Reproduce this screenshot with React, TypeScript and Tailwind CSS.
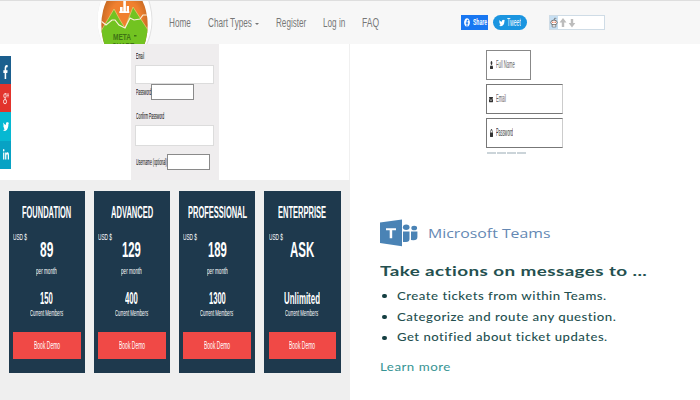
import { useLayoutEffect, useRef, useState, type ReactNode } from 'react';
import { FaFacebookF, FaTwitter, FaLinkedinIn, FaUser, FaEnvelope, FaLock, FaFacebook } from 'react-icons/fa';

/* One line of text condensed or expanded to the width given in className. */
function Fit({ className, children }: { className: string; children: ReactNode }) {
  const box = useRef<HTMLSpanElement>(null);
  const text = useRef<HTMLSpanElement>(null);
  const [scale, setScale] = useState(1);
  useLayoutEffect(() => {
    const measure = () => {
      if (box.current && text.current) setScale(box.current.clientWidth / text.current.offsetWidth);
    };
    measure();
    document.fonts.ready.then(measure);
  }, []);
  return (
    <span ref={box} className={`block shrink-0 whitespace-nowrap ${className}`}>
      <span ref={text} className="inline-block origin-left" style={{ transform: `scaleX(${scale})` }}>
        {children}
      </span>
    </span>
  );
}

function MetaLogo() {
  return (
    <svg className="ml-[97px] h-[44px] w-[56px] shrink-0" viewBox="0 0 56 44">
      <defs>
        <clipPath id="inner">
          <ellipse cx="27.5" cy="25" rx="23.2" ry="38" />
        </clipPath>
        <radialGradient id="orange" cx="50%" cy="50%" r="55%">
          <stop offset="50%" stopColor="#f0802f" />
          <stop offset="100%" stopColor="#a85a1c" />
        </radialGradient>
      </defs>
      <ellipse cx="28" cy="20" rx="27.5" ry="41" fill="#e2e2e2" />
      <ellipse cx="27.5" cy="20" rx="27" ry="40" fill="#fff" />
      <g clipPath="url(#inner)">
        <rect width="56" height="66" y="-14" fill="url(#orange)" />
        <path d="M4 31 L17 9 L23 20 L28 28 L36 7 L51 30 V56 H4Z" fill="#72c321" />
        <path d="M4 31 L17 9 L23 20 L28 28 L36 7 L51 30" fill="none" stroke="#e8d27a" strokeWidth=".7" />
        <path d="M4 21 L9 25 L15 20 L18 20 L22 25 L28 28 L33 18 L37 20 L43 19 L46 15 L51 15" fill="none" stroke="#fbf0da" strokeWidth="1.2" />
        <path d="M23 7h2.6v5H23zM26.3 0h2.6v12h-2.6zM29.7 6h2.3v6h-2.3zM22.3 11.3h10V13h-10z" fill="#fff" />
      </g>
      <text x="16" y="39.7" textLength="18" lengthAdjust="spacingAndGlyphs" fill="#3f7414" fontSize="9.5" fontWeight="700" fontFamily="Liberation Sans, sans-serif">META</text>
      <path d="M37 35h2.5v1.5H37z" fill="#3f7414" />
      <text x="15" y="49" textLength="22" lengthAdjust="spacingAndGlyphs" fill="#3f7414" fontSize="9" fontWeight="700" fontFamily="Liberation Sans, sans-serif">CHART</text>
    </svg>
  );
}

function Header() {
  return (
    <header className="flex h-[44px] w-full items-start overflow-hidden border-t border-[#dedede] bg-[#f7f7f7]">
      <div className="-mt-px"><MetaLogo /></div>
      <nav className="flex h-[43px] items-center pl-[16px] text-[13px] leading-[20px] text-[#777]">
        <Fit className="w-[22px]">Home</Fit>
        <Fit className="ml-[17px] w-[44px]">Chart Types</Fit>
        <span className="mt-[3px] ml-[3px] border-x-2 border-t-2 border-x-transparent border-t-[#777]" />
        <Fit className="ml-[17px] w-[30px]">Register</Fit>
        <Fit className="ml-[17px] w-[22px]">Log in</Fit>
        <Fit className="ml-[17px] w-[17px]">FAQ</Fit>
      </nav>
      <div className="mt-[14px] ml-[82px] flex h-[15px] w-[27px] items-center bg-[#1877f2] pl-[3px] text-[9px] leading-[15px] font-bold text-white">
        <FaFacebook className="h-[9px] w-[6px]" preserveAspectRatio="none" />
        <Fit className="ml-[3px] w-[14px]">Share</Fit>
      </div>
      <div className="mt-[14px] ml-[5px] flex h-[15px] w-[34px] items-center rounded-full bg-[#1b95e0] pl-[6px] text-[10px] leading-[15px] text-white">
        <FaTwitter className="h-[8px] w-[6px]" preserveAspectRatio="none" />
        <Fit className="ml-[2px] w-[14px]">Tweet</Fit>
      </div>
      <div className="mt-[14px] ml-[22px] flex h-[15px] w-[56px] items-center border border-[#cfdce6] bg-white">
        <span className="flex h-[13px] w-[8px] items-center justify-center bg-[#c7dff2]">
          <svg className="h-[11px] w-[8px]" viewBox="0 0 8 11">
            <path d="M4 3.5 L4.6 1.2 L6.3 1.4" fill="none" stroke="#555" strokeWidth=".6" />
            <ellipse cx="4" cy="5.5" rx="3.2" ry="2.4" fill="#fff" stroke="#444" strokeWidth=".7" />
            <path d="M2.2 7.8h3.6V10H2.2z" fill="#fff" stroke="#555" strokeWidth=".6" />
            <circle cx="2.8" cy="5.3" r=".7" fill="#e4572e" />
            <circle cx="5.2" cy="5.3" r=".7" fill="#e4572e" />
          </svg>
        </span>
        <svg className="ml-px h-[10px] w-[17px]" viewBox="0 0 17 10">
          <path d="M4 0 L7.5 4.5 H5.2 V9 H2.8 V4.5 H.5Z M13 9.5 L16.3 5 H14.2 V1 H11.8 V5 H9.7Z" fill="#bcbcbc" />
        </svg>
      </div>
    </header>
  );
}

function SocialRail() {
  return (
    <div className="absolute top-[56px] left-0 flex w-[11px] flex-col text-white">
      <span className="flex h-[28px] items-center justify-center bg-[#1b5f8e] pt-[3px]">
        <FaFacebookF className="h-[14px] w-[5px]" preserveAspectRatio="none" />
      </span>
      <span className="flex h-[28px] items-center justify-center bg-[#e2332c]">
        <svg className="h-[13px] w-[6px]" viewBox="0 0 6 13">
          <ellipse cx="2" cy="3.8" rx="1.2" ry="2.2" fill="none" stroke="#fff" strokeWidth=".8" />
          <ellipse cx="2" cy="9.6" rx="1.5" ry="2.2" fill="none" stroke="#fff" strokeWidth=".8" />
          <path d="M2 6 L2.8 7.4 M2 1.6H3.6 M5 1v4.5 M4 3.2h2" fill="none" stroke="#fff" strokeWidth=".6" />
        </svg>
      </span>
      <span className="flex h-[29px] items-center justify-center bg-[#06b8d2]">
        <FaTwitter className="h-[11px] w-[6px]" preserveAspectRatio="none" />
      </span>
      <span className="flex h-[28px] items-center justify-center bg-[#08a2c4]">
        <FaLinkedinIn className="h-[12px] w-[6px]" preserveAspectRatio="none" />
      </span>
    </div>
  );
}

function SignupForm() {
  return (
    <section className="h-[136px] w-[350px] border-r border-[#f0f0f0] bg-white pl-[131px]">
      <div className="flex h-full w-[88px] flex-col bg-[#efedee] pl-[4px] text-[8.5px] leading-[12px] text-black">
        <Fit className="mt-[6px] ml-px w-[8px]">Email</Fit>
        <div className="mt-[3px] h-[19px] w-[79px] border border-[#dcdcdc] bg-white" />
        <div className="flex h-[16px] items-center">
          <Fit className="ml-px w-[15px]">Password</Fit>
          <div className="h-[16px] w-[43px] border border-[#8a8a8a] bg-white" />
        </div>
        <Fit className="mt-[10px] ml-px w-[28px]">Confirm Password</Fit>
        <div className="mt-[3px] h-[21px] w-[79px] border border-[#dcdcdc] bg-white" />
        <div className="mt-[8px] flex h-[16px] items-center">
          <Fit className="ml-px w-[31px]">Username (optional)</Fit>
          <div className="h-[16px] w-[43px] border border-[#8a8a8a] bg-white" />
        </div>
      </div>
    </section>
  );
}

const plans = [
  { name: 'FOUNDATION', nameW: 'w-[49px]', price: '89', priceW: 'w-[13px]', period: 'per month', members: '150', membersW: 'w-[13px]' },
  { name: 'ADVANCED', nameW: 'w-[42px]', price: '129', priceW: 'w-[19px]', period: 'per month', members: '400', membersW: 'w-[13px]' },
  { name: 'PROFESSIONAL', nameW: 'w-[59px]', price: '189', priceW: 'w-[19px]', period: 'per month', members: '1300', membersW: 'w-[17px]' },
  { name: 'ENTERPRISE', nameW: 'w-[48px]', price: 'ASK', priceW: 'w-[24px]', period: '', members: 'Unlimited', membersW: 'w-[36px]' },
];

function Pricing() {
  return (
    <section className="flex h-[220px] w-[350px] gap-[8.7px] bg-[#efefef] pt-[11px] pl-[8.5px]">
      {plans.map((p) => (
        <article key={p.name} className="flex h-[182px] w-[76.5px] shrink-0 flex-col items-center bg-[#1e394d] pt-[12px] text-white">
          <div className="h-[20px] text-[16px] leading-[20px] font-bold"><Fit className={p.nameW}>{p.name}</Fit></div>
          <div className="mt-[8px] flex h-[12px] self-start pl-[4.5px] text-[9.5px] leading-[12px]"><Fit className="w-[14px]">USD $</Fit></div>
          <div className="-mt-[5px] h-[24px] text-[22px] leading-[24px] font-bold"><Fit className={p.priceW}>{p.price}</Fit></div>
          <div className="mt-[3px] h-[12px] text-[9.5px] leading-[12px]">
            {p.period && <Fit className="w-[21px]">{p.period}</Fit>}
          </div>
          <div className="mt-[13px] h-[18px] text-[16px] leading-[18px] font-bold"><Fit className={p.membersW}>{p.members}</Fit></div>
          <div className="flex h-[10px] text-[9px] leading-[10px]">
            <Fit className="w-[33px]">Current Members</Fit>
            <span className="-mt-px w-[1px] text-[5px] text-[#3a8fc4]">'</span>
          </div>
          <div className="mt-[14px] flex h-[27px] w-[67.5px] items-center justify-center bg-[#f04946] text-[10px] leading-[12px]">
            <Fit className="w-[26px]">Book Demo</Fit>
          </div>
        </article>
      ))}
    </section>
  );
}

function AccountFields() {
  return (
    <section className="flex h-[136px] flex-col pt-[6px] pl-[136px] text-[10px] leading-[14px] text-[#666]">
      <div className="flex h-[30px] w-[45px] items-center border border-[#888] pl-[3px]">
        <FaUser className="h-[8px] w-[3px] text-[#333]" preserveAspectRatio="none" />
        <Fit className="ml-[3px] w-[19px]">Full Name</Fit>
      </div>
      <div className="mt-[4px] flex h-[30px] w-[77px] items-center border border-[#777] border-r-[#ccc] pl-[2px]">
        <FaEnvelope className="h-[7px] w-[4px] text-[#333]" preserveAspectRatio="none" />
        <Fit className="ml-[3px] w-[10px]">Email</Fit>
      </div>
      <div className="mt-[4px] flex h-[30px] w-[77px] items-center border border-[#777] border-r-[#ccc] pl-[3px]">
        <FaLock className="h-[8px] w-[3px] text-[#333]" preserveAspectRatio="none" />
        <Fit className="ml-[3px] w-[17px] text-[#333]">Password</Fit>
      </div>
      <div className="mt-[4px] ml-px flex gap-px">
        {[0, 1, 2, 3].map((i) => <span key={i} className="h-[2px] w-[9px] bg-[#cbd4d9]" />)}
      </div>
    </section>
  );
}

const actions = [
  { text: 'Create tickets from within Teams.', width: 'w-[210px]' },
  { text: 'Categorize and route any question.', width: 'w-[219px]' },
  { text: 'Get notified about ticket updates.', width: 'w-[211px]' },
];

function TeamsPanel() {
  return (
    <section className="flex h-[220px] flex-col pt-[39px] pl-[30px] font-['Lato',sans-serif] text-[#24504f] [font-variant-ligatures:none]">
      <div className="flex h-[28px] items-center">
        <svg className="h-[28px] w-[38px]" viewBox="0 0 38 28">
          <path d="M0 3.5 L22 .5 V27.2 L0 24Z" fill="#4a83b5" />
          <path d="M6 9.2h10v2.1h-3.8v8H9.7v-8H6z" fill="#fff" />
          <ellipse cx="26.2" cy="8.3" rx="3.3" ry="2.7" fill="#4a83b5" />
          <ellipse cx="34.2" cy="9" rx="2.9" ry="2.3" fill="#4a83b5" />
          <path d="M23 12.5h6.5v7.5q0 3-3.5 3h-3z M31 12.5h6.4v5.5q0 3.2-4 3.2l-2.4-.2z" fill="#4a83b5" />
        </svg>
        <Fit className="ml-[10px] w-[123px] font-['Open_Sans',sans-serif] text-[13.5px] leading-[24px] text-[#6488b3]">Microsoft Teams</Fit>
      </div>
      <h2 className="mt-[14px] text-[14px] leading-[20px] font-bold"><Fit className="w-[267px] tracking-[0.3px]">Take actions on messages to ...</Fit></h2>
      <ul className="mt-[5px] text-[10.5px] leading-[20.7px] font-medium">
        {actions.map((a) => (
          <li key={a.text} className="flex h-[20.7px] items-center">
            <span className="ml-[2px] h-[4px] w-[5px] rounded-full bg-[#153f42]" />
            <Fit className={`ml-[10px] tracking-[0.4px] ${a.width}`}>{a.text}</Fit>
          </li>
        ))}
      </ul>
      <a className="mt-[10px] text-[10.5px] leading-[18px] text-[#379494]"><Fit className="w-[71px] tracking-[0.4px]">Learn more</Fit></a>
    </section>
  );
}

export default function App() {
  return (
    <div className="relative h-[400px] w-[700px] overflow-hidden bg-white font-['Liberation_Sans',Arial,sans-serif]">
      <Header />
      <main className="flex">
        <div className="w-[350px]">
          <SignupForm />
          <Pricing />
        </div>
        <div className="w-[350px]">
          <AccountFields />
          <TeamsPanel />
        </div>
      </main>
      <SocialRail />
    </div>
  );
}
